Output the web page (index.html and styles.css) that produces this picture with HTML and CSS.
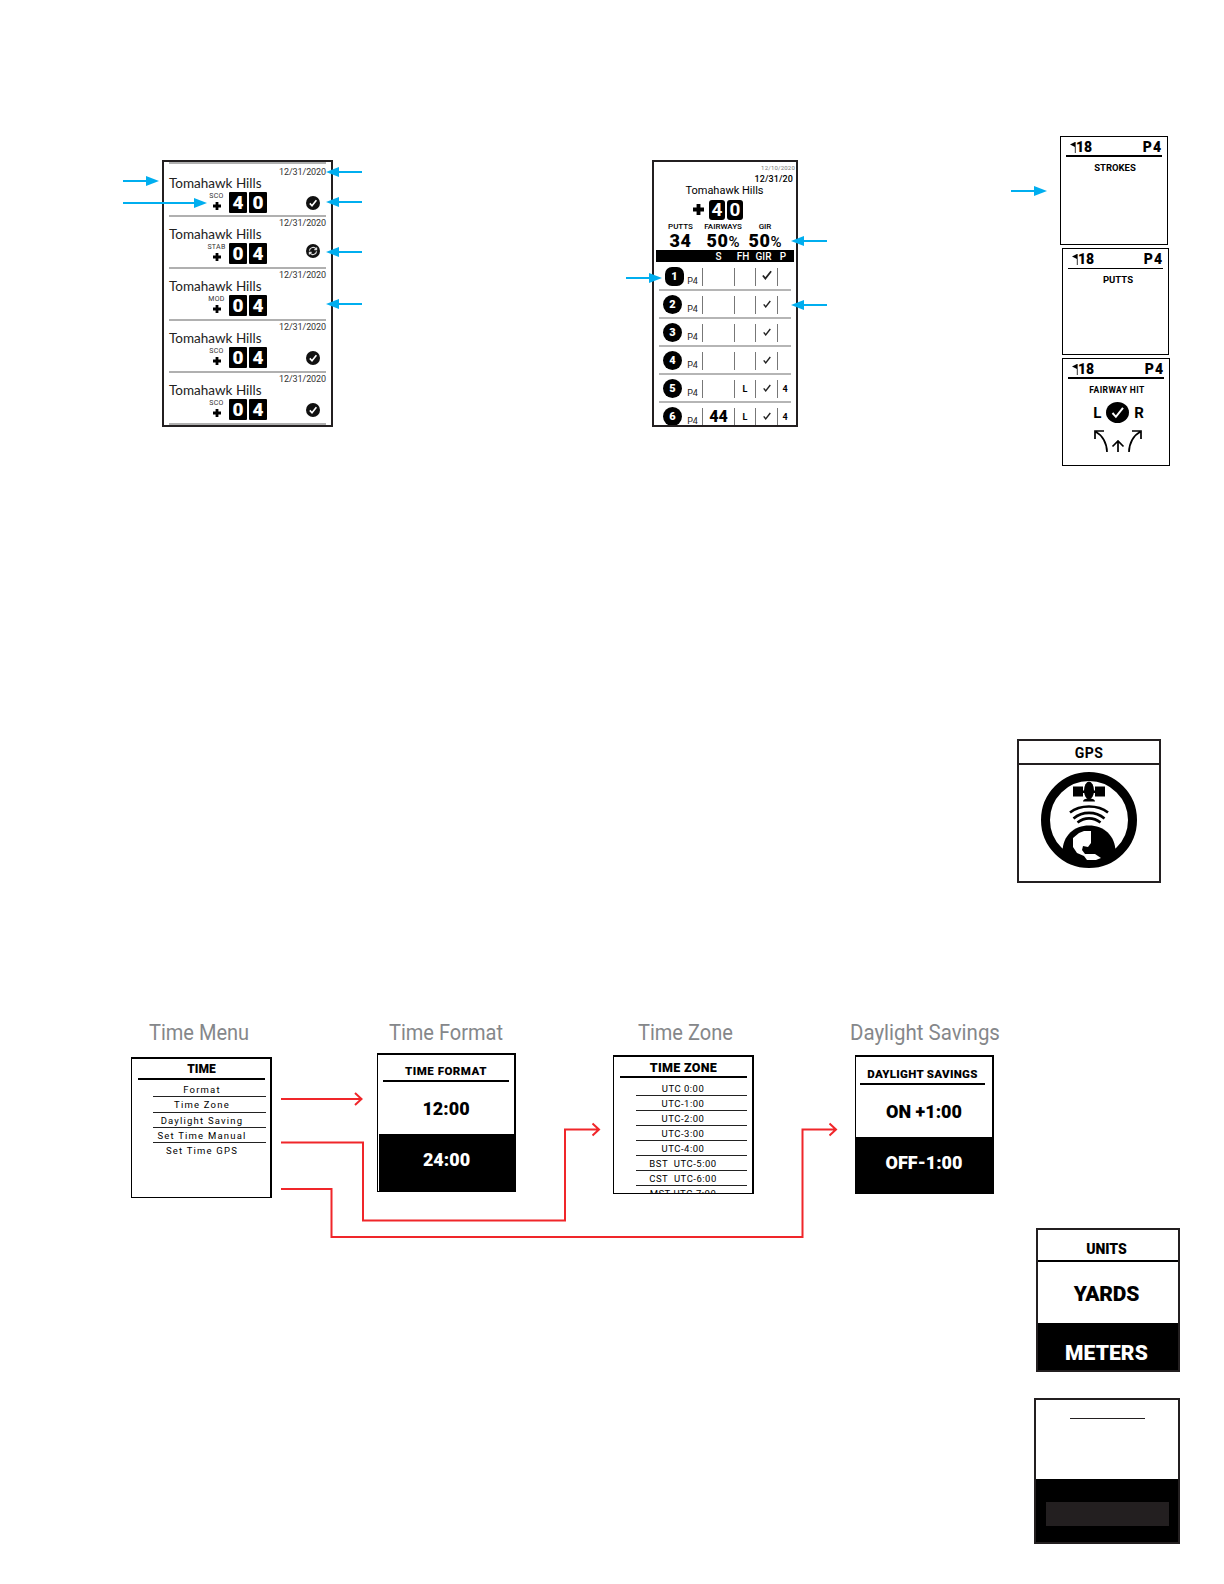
FILE: index.html
```html
<!DOCTYPE html>
<html lang="en">

<head>
    <meta charset="UTF-8" />
    <meta name="viewport" content="width=device-width, initial-scale=1.0" />
    <title>Score, GPS, Time and Units Screens</title>
    <link rel="stylesheet" href="styles.css">
</head>

<body>
    <svg class="symbols" width="0" height="0">
        <symbol id="plus" viewBox="0 0 8 8"><path d="M4 0v8M0 4h8" stroke="#000" stroke-width="2.8" /></symbol>
        <symbol id="done" viewBox="0 0 14 14">
            <circle cx="7" cy="7" r="7" fill="#111" />
            <path d="M3.8 7.4l2.2 2.4 4.4-5.6" fill="none" stroke="#fff" stroke-width="1.6" />
        </symbol>
        <symbol id="sync" viewBox="0 0 14 14">
            <circle cx="7" cy="7" r="7" fill="#111" />
            <path d="M3.4 6.6a3.7 3.7 0 0 1 6.8-1.4M10.6 7.4a3.7 3.7 0 0 1-6.8 1.4M10.6 3.4v2.3H8.3M3.4 10.6V8.3h2.3" fill="none" stroke="#ddd" stroke-width="1.2" />
        </symbol>
        <symbol id="tick" viewBox="0 0 8 8"><path d="M.7 4.4l2 2.5L7.3 1" fill="none" stroke="#222" stroke-width="1.4" /></symbol>
        <symbol id="flag" viewBox="0 0 6 11"><path d="M0 2.500L5 0v5z" /><path d="M5.300 0v11" stroke="#000" stroke-width=".8" /></symbol>
    </svg>

    <main class="sheet">
        <section class="screen rounds">
            <div class="round">
                <div class="date">12/31/2020</div>
                <div class="course">Tomahawk Hills</div>
                <div class="result"><div class="mode">SCO<svg><use href="#plus" /></svg></div><b>4</b><b>0</b><svg class="status"><use href="#done" /></svg></div>
            </div>
            <div class="round">
                <div class="date">12/31/2020</div>
                <div class="course">Tomahawk Hills</div>
                <div class="result"><div class="mode">STAB<svg><use href="#plus" /></svg></div><b>0</b><b>4</b><svg class="status sync"><use href="#sync" /></svg></div>
            </div>
            <div class="round">
                <div class="date">12/31/2020</div>
                <div class="course">Tomahawk Hills</div>
                <div class="result"><div class="mode">MOD<svg><use href="#plus" /></svg></div><b>0</b><b>4</b></div>
            </div>
            <div class="round">
                <div class="date">12/31/2020</div>
                <div class="course">Tomahawk Hills</div>
                <div class="result"><div class="mode">SCO<svg><use href="#plus" /></svg></div><b>0</b><b>4</b><svg class="status"><use href="#done" /></svg></div>
            </div>
            <div class="round">
                <div class="date">12/31/2020</div>
                <div class="course">Tomahawk Hills</div>
                <div class="result"><div class="mode">SCO<svg><use href="#plus" /></svg></div><b>0</b><b>4</b><svg class="status"><use href="#done" /></svg></div>
            </div>
        </section>

        <section class="screen card">
            <div class="card-old-date">12/10/2020</div>
            <div class="card-date">12/31/20</div>
            <div class="card-course">Tomahawk Hills</div>
            <div class="card-score"><svg><use href="#plus" /></svg><b>4</b><b>0</b></div>
            <div class="stats">
                <div><span>PUTTS</span><b>34</b></div>
                <div><span>FAIRWAYS</span><b>50<i>%</i></b></div>
                <div><span>GIR</span><b>50<i>%</i></b></div>
            </div>
            <div class="holes-head"><span></span><span>S</span><span>FH</span><span>GIR</span><span>P</span></div>
            <div class="hole first"><b class="num">1</b><span class="par">P4</span><span></span><span></span><span><svg><use href="#tick" /></svg></span><span></span></div>
            <div class="hole"><b class="num">2</b><span class="par">P4</span><span></span><span></span><span><svg><use href="#tick" /></svg></span><span></span></div>
            <div class="hole"><b class="num">3</b><span class="par">P4</span><span></span><span></span><span><svg><use href="#tick" /></svg></span><span></span></div>
            <div class="hole"><b class="num">4</b><span class="par">P4</span><span></span><span></span><span><svg><use href="#tick" /></svg></span><span></span></div>
            <div class="hole"><b class="num">5</b><span class="par">P4</span><span></span><span>L</span><span><svg><use href="#tick" /></svg></span><span>4</span></div>
            <div class="hole"><b class="num">6</b><span class="par">P4</span><span class="strokes">44</span><span>L</span><span><svg><use href="#tick" /></svg></span><span>4</span></div>
        </section>

        <section class="screen entry entry-strokes">
            <header><span><svg><use href="#flag" /></svg>18</span><span class="entry-par">P4</span></header>
            <h3>STROKES</h3>
        </section>
        <section class="screen entry entry-putts">
            <header><span><svg><use href="#flag" /></svg>18</span><span class="entry-par">P4</span></header>
            <h3>PUTTS</h3>
        </section>
        <section class="screen entry entry-fairway">
            <header><span><svg><use href="#flag" /></svg>18</span><span class="entry-par">P4</span></header>
            <h3>FAIRWAY HIT</h3>
            <div class="choices">
                <span>L</span>
                <svg width="23" height="21" viewBox="0 0 23 21"><ellipse cx="11.5" cy="10.5" rx="11.5" ry="10.5" /><path d="M6.5 11l3.4 3.8L17 5.8" fill="none" stroke="#fff" stroke-width="2" /></svg>
                <span>R</span>
            </div>
            <svg class="directions" width="48" height="23" viewBox="0 0 48 23" fill="none" stroke="#000" stroke-width="1.7">
                <path d="M1 9V1h9M2 2c6 3 11 11 11 20M24 22V11M18.500 16.500L24 11l5.500 5.500M47 9V1h-9M46 2c-6 3-11 11-11 20" />
            </svg>
        </section>

        <section class="screen gps">
            <h3>GPS</h3>
            <svg width="96" height="96" viewBox="0 0 96 96">
                <circle cx="48" cy="48" r="43.500" fill="#fff" stroke="#000" stroke-width="9" />
                <path d="M32 14.500h10v10H32zM54 14.500h10v10H54zM40 18.500h16v2.500H40zM42 29.500q0-3 6-3t6 3z" />
                <ellipse cx="48" cy="18.500" rx="5" ry="9" />
                <path d="M29 40.500c10-8 28-8 38 0M32.500 46.500c9-7.500 22-7.500 31 0M36.500 50.500c7-5.500 16-5.500 23 0" fill="none" stroke="#000" stroke-width="2.600" />
                <path d="M21.500 81C21 64 33 53.500 48 53.500S75 64 74.500 81Q48 101 21.500 81z" />
                <path fill="#fff" d="M38 61l5-2h7v12l-3 4-5-1-1 4 3 4h10l6 4-5 2h-9l-3-4-7-3-4-6v-9z" />
            </svg>
        </section>

        <section class="screen menu time-menu">
            <h3>TIME</h3>
            <ul>
                <li>Format</li>
                <li>Time Zone</li>
                <li>Daylight Saving</li>
                <li>Set Time Manual</li>
                <li>Set Time GPS</li>
            </ul>
        </section>
        <section class="screen toggle time-format">
            <h3>TIME FORMAT</h3>
            <div class="option">12:00</div>
            <div class="option selected">24:00</div>
        </section>
        <section class="screen menu time-zone">
            <h3>TIME ZONE</h3>
            <ul>
                <li>UTC 0:00</li>
                <li>UTC-1:00</li>
                <li>UTC-2:00</li>
                <li>UTC-3:00</li>
                <li>UTC-4:00</li>
                <li>BST&nbsp; UTC-5:00</li>
                <li>CST&nbsp; UTC-6:00</li>
                <li>MST UTC-7:00</li>
            </ul>
        </section>
        <section class="screen toggle daylight">
            <h3>DAYLIGHT SAVINGS</h3>
            <div class="option">ON +1:00</div>
            <div class="option selected">OFF-1:00</div>
        </section>
        <h2 class="label-menu">Time Menu</h2>
        <h2 class="label-format">Time Format</h2>
        <h2 class="label-zone">Time Zone</h2>
        <h2 class="label-daylight">Daylight Savings</h2>

        <section class="screen units">
            <h3>UNITS</h3>
            <div class="option">YARDS</div>
            <div class="option selected">METERS</div>
        </section>

        <section class="screen blank">
            <div class="blank-top"></div>
            <div class="blank-bottom"><div></div></div>
        </section>

        <!-- callout arrows and menu flow lines -->
        <svg class="arrows" width="1224" height="1584" viewBox="0 0 1224 1584">
            <defs>
                <marker id="head" markerUnits="userSpaceOnUse" markerWidth="14" markerHeight="10" refX="1" refY="5" orient="auto"><path d="M0 0l13 5-13 5z" fill="#00aeef" /></marker>
            </defs>
            <g stroke="#00aeef" stroke-width="2">
                <path d="M123 181h24" marker-end="url(#head)" />
                <path d="M123 203h72" marker-end="url(#head)" />
                <path d="M362 172h-24" marker-end="url(#head)" />
                <path d="M362 202h-24" marker-end="url(#head)" />
                <path d="M362 252h-24" marker-end="url(#head)" />
                <path d="M362 304h-24" marker-end="url(#head)" />
                <path d="M626 278h24" marker-end="url(#head)" />
                <path d="M827 241h-24" marker-end="url(#head)" />
                <path d="M827 305h-24" marker-end="url(#head)" />
                <path d="M1011 191h24" marker-end="url(#head)" />
            </g>
            <g fill="none" stroke="#f0262a" stroke-width="2">
                <path d="M281 1099h80M355 1093l6.500 6-6.500 6" />
                <path d="M281 1142.500h82v78h202V1129.500h34M592.500 1123.500l6.500 6-6.500 6" />
                <path d="M281 1189h50.500v48h471V1129.500h34M829.500 1123.500l6.500 6-6.500 6" />
            </g>
        </svg>
    </main>
</body>

</html>
```

FILE: styles.css
```css
* {
    box-sizing: border-box;
}

body {
    margin: 0;
    background: #fff;
    color: #000;
    font-family: Roboto, "Liberation Sans", sans-serif;
}

h2,
h3,
ul {
    margin: 0;
    padding: 0;
    list-style: none;
}

.symbols {
    position: absolute;
}

.sheet {
    position: relative;
    width: 1224px;
    height: 1584px;
    overflow: hidden;
}

.screen {
    position: absolute;
    overflow: hidden;
    border: 2px solid #231f20;
    background: #fff;
}

.arrows {
    position: absolute;
    left: 0;
    top: 0;
}

/* saved rounds */
.rounds {
    left: 162px;
    top: 160px;
    width: 171px;
    height: 267px;
    padding: 0 5px;
}

.rounds::before {
    content: "";
    display: block;
    border-bottom: 2px solid #b0b0b0;
}

.round {
    height: 52px;
    border-bottom: 2px solid #b0b0b0;
}

.round:first-child {
    height: 53px;
    padding-top: 2px;
}

.date {
    height: 11px;
    line-height: 13px;
    text-align: right;
    font-size: 9px;
    letter-spacing: -.1px;
    color: #333;
}

.course {
    height: 15px;
    line-height: 12px;
    font-family: Lato, sans-serif;
    font-size: 13.500px;
    letter-spacing: 0;
    color: #222;
    white-space: nowrap;
}

.result {
    display: flex;
    gap: 2px;
    height: 22px;
    padding-left: 37px;
}

.mode {
    display: flex;
    flex-direction: column;
    align-items: center;
    gap: 2px;
    width: 21px;
    font-size: 7px;
    line-height: 8px;
    letter-spacing: .3px;
    color: #333;
}

.mode svg {
    width: 8px;
    height: 8px;
}

.result b {
    width: 18px;
    height: 21px;
    border-radius: 1px;
    background: #000;
    color: #fff;
    font-size: 19px;
    font-weight: 900;
    line-height: 21px;
    text-align: center;
}

.status {
    width: 14px;
    height: 14px;
    margin: 4px 6px 0 auto;
}

.sync {
    margin-top: 1px;
}

/* scorecard */
.card {
    left: 652px;
    top: 160px;
    width: 146px;
    height: 267px;
}

.card-old-date {
    height: 12px;
    padding: 3px 1px 0 0;
    text-align: right;
    font-size: 6px;
    line-height: 6px;
    letter-spacing: .2px;
    color: #777;
}

.card-date {
    height: 9px;
    padding-right: 3px;
    text-align: right;
    font-size: 9px;
    font-weight: 500;
    line-height: 10px;
    letter-spacing: .1px;
}

.card-course {
    height: 17px;
    padding-right: 1px;
    text-align: center;
    font-size: 11px;
    line-height: 16px;
    letter-spacing: 0;
}

.card-score {
    display: flex;
    align-items: center;
    gap: 2px;
    height: 20px;
    padding-left: 39px;
}

.card-score svg {
    width: 11px;
    height: 11px;
    margin: -2px 3px 0 0;
}

.card-score b {
    width: 16px;
    height: 20px;
    border-radius: 3px;
    background: #000;
    color: #fff;
    font-size: 19px;
    line-height: 20px;
    text-align: center;
}

.stats {
    display: grid;
    grid-template-columns: 45px 40px 44px;
    height: 28px;
    margin: 2px 0 0 4px;
    text-align: center;
}

.stats span,
.stats b {
    display: block;
    white-space: nowrap;
}

.stats span {
    height: 10px;
    font-size: 8px;
    font-weight: 500;
    line-height: 10px;
}

.stats b {
    font-size: 18px;
    font-weight: 900;
    line-height: 17px;
    letter-spacing: .5px;
}

.stats i {
    font-style: normal;
    font-weight: 500;
    font-size: 15px;
    letter-spacing: 0;
}

.holes-head {
    display: grid;
    grid-template-columns: 47px 31px 18px 23px 16px;
    height: 12px;
    margin: 0 2px;
    background: #000;
    color: #fff;
    font-size: 10px;
    font-weight: 500;
    line-height: 13px;
    text-align: center;
}

.hole {
    display: grid;
    grid-template-columns: 24px 19px 32px 21px 22px 15px;
    align-items: center;
    height: 28px;
    margin: 0 5px;
    padding-top: 1px;
    border-bottom: 2px solid #b5b5b5;
    font-size: 9px;
    font-weight: 700;
}

.hole.first {
    height: 29px;
    padding-top: 2px;
}

.hole span {
    height: 18px;
    line-height: 18px;
    text-align: center;
}

.hole span + span {
    border-left: 1px solid #777;
}

.hole svg {
    width: 8px;
    height: 8px;
}

.hole.first svg {
    width: 10px;
    height: 10px;
}

.num {
    width: 19px;
    height: 19px;
    margin-left: 4px;
    border-radius: 50%;
    background: #000;
    color: #fff;
    font-size: 11px;
    line-height: 19px;
    text-align: center;
}

.first .num {
    margin-left: 6px;
    border-radius: 7px;
}

.hole .par {
    padding-top: 4px;
    font-weight: 400;
    color: #222;
}

.hole .strokes {
    font-size: 16px;
    font-weight: 900;
}

/* stroke, putt and fairway entry */
.entry {
    border: 1px solid #000;
    padding: 0 5px;
}

.entry-strokes {
    left: 1060px;
    top: 136px;
    width: 108px;
    height: 109px;
}

.entry-putts {
    left: 1062px;
    top: 248px;
    width: 107px;
    height: 107px;
}

.entry-fairway {
    left: 1062px;
    top: 358px;
    width: 108px;
    height: 108px;
}

.entry header {
    display: flex;
    justify-content: space-between;
    height: 20px;
    padding: 0 0 0 4px;
    border-bottom: 2px solid #000;
    font-size: 14px;
    font-weight: 900;
    line-height: 21px;
}

.entry-putts header {
    border-bottom-width: 1px;
}

.entry header svg {
    width: 6px;
    height: 11px;
    margin-bottom: -1px;
}

.entry-par {
    letter-spacing: 1px;
}

.entry h3 {
    padding: 5px 0 0 2px;
    text-align: center;
    font-size: 9.500px;
    line-height: 12px;
}

.entry-putts h3 {
    padding-left: 5px;
}

.entry-fairway h3 {
    font-size: 8.500px;
    letter-spacing: .4px;
}

.choices {
    display: flex;
    justify-content: center;
    align-items: center;
    gap: 5px;
    height: 21px;
    margin-top: 6px;
    padding-left: 5px;
    font-size: 15px;
    font-weight: 700;
}

.directions {
    display: block;
    margin: 7px 0 0 26px;
}

/* gps */
.gps {
    left: 1017px;
    top: 739px;
    width: 144px;
    height: 144px;
}

.gps h3 {
    height: 24px;
    border-bottom: 2px solid #231f20;
    text-align: center;
    font-size: 14px;
    line-height: 25px;
    letter-spacing: .5px;
}

.gps svg {
    display: block;
    margin: 7px 0 0 22px;
}

/* time flow */
h2 {
    position: absolute;
    top: 1020px;
    color: #85878a;
    font-size: 22px;
    font-weight: 400;
    line-height: 26px;
    white-space: nowrap;
    transform: scaleX(.91);
    transform-origin: left;
}

.label-menu {
    left: 149px;
}

.label-format {
    left: 389px;
}

.label-zone {
    left: 638px;
}

.label-daylight {
    left: 850px;
    transform: scaleX(.93);
}

.menu,
.toggle {
    border: 1px solid #000;
    border-top-width: 2px;
    border-right-width: 2px;
    text-align: center;
}

.menu h3 {
    height: 21px;
    margin: 0 5px 0 6px;
    border-bottom: 2px solid #000;
    font-size: 12.500px;
    font-weight: 900;
    line-height: 22px;
    letter-spacing: .3px;
}

.menu ul {
    margin: 3px 5px 0 22px;
    font-size: 9.500px;
}

.menu li {
    height: 15px;
    padding-right: 17px;
    border-bottom: 1px solid #222;
    line-height: 15px;
    white-space: nowrap;
}

.time-menu {
    left: 131px;
    top: 1057px;
    width: 141px;
    height: 141px;
}

.time-menu h3 {
    font-size: 12px;
    line-height: 20px;
    letter-spacing: 0;
}

.time-menu ul {
    margin: 2px 4px 0 21px;
    letter-spacing: 1.200px;
}

.time-menu li {
    height: 15.300px;
    padding-right: 15px;
}

.time-menu li:last-child {
    border: 0;
}

.time-zone {
    left: 613px;
    top: 1055px;
    width: 141px;
    height: 139px;
}

.time-zone ul {
    letter-spacing: .5px;
}

.toggle h3 {
    height: 27px;
    margin: 0 5px;
    padding-top: 5px;
    border-bottom: 2px solid #000;
    font-size: 11.500px;
    font-weight: 900;
    line-height: 23px;
    letter-spacing: .5px;
    white-space: nowrap;
}

.option {
    height: 52px;
    font-size: 18px;
    font-weight: 900;
    line-height: 54px;
}

.option.selected {
    height: 60px;
    background: #000;
    color: #fff;
    line-height: 52px;
}

.time-format {
    left: 377px;
    top: 1053px;
    width: 139px;
    height: 139px;
}

.time-format .selected {
    margin-left: 1px;
}

.daylight {
    left: 855px;
    top: 1055px;
    width: 139px;
    height: 139px;
}

.daylight h3 {
    height: 28px;
    margin: 0 7px 0 4px;
    line-height: 24px;
    letter-spacing: .3px;
}

/* units */
.units {
    left: 1036px;
    top: 1228px;
    width: 144px;
    height: 144px;
    text-align: center;
}

.units h3 {
    height: 32px;
    padding-right: 3px;
    border-bottom: 2px solid #000;
    font-size: 14px;
    font-weight: 900;
    line-height: 39px;
}

.units .option {
    height: 61px;
    padding-right: 3px;
    font-size: 21px;
    line-height: 65px;
    letter-spacing: -.2px;
}

.units .selected {
    line-height: 61px;
    letter-spacing: .1px;
}

.blank {
    left: 1034px;
    top: 1398px;
    width: 146px;
    height: 146px;
}

.blank-top {
    height: 79px;
    padding-top: 18px;
}

.blank-top::before {
    content: "";
    display: block;
    width: 75px;
    height: 1px;
    margin-left: 34px;
    background: #231f20;
}

.blank-bottom {
    height: 63px;
    padding: 23px 9px 0 10px;
    background: #000;
}

.blank-bottom div {
    height: 24px;
    background: #231f20;
}
```
